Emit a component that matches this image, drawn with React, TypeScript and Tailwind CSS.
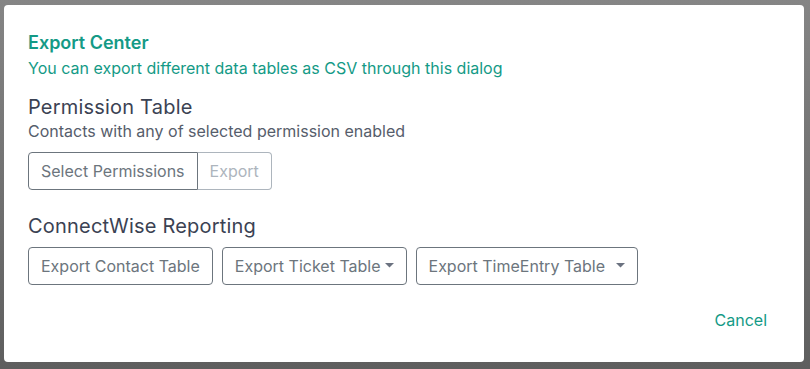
import { ReactNode } from 'react';

function Caret() {
    return (
        <svg width="9" height="5" viewBox="0 0 9 5" className="ml-[4px] mt-[-2px]">
            <path d="M0 0 L9 0 L4.5 4.5 Z" fill="#6b7280" />
        </svg>
    );
}

function OutlineButton({ children, className = '' }: { children: ReactNode, className?: string }) {
    return (
        <button className={`h-[38px] flex items-center border border-[#6c757d] rounded-[4px] px-[12px] text-[16px] text-[#6c757d] bg-white ${className}`}>
            {children}
        </button>
    );
}

export default function App() {
    return (
        <div className="w-full h-[369px] bg-gradient-to-b from-[#858585] to-[#5e5e5e] pt-[5px] pl-[4px] pr-[6px] pb-[7px] font-['Inter',sans-serif]">
            <div className="h-full bg-white rounded-[4px] pl-[24px] pr-[37px] pt-[27px] flex flex-col">
                {/* Header */}
                <h1 className="text-[18px] leading-[22px] font-semibold text-[#149a86]">Export Center</h1>
                <p className="text-[16px] leading-[24px] mt-[2px] text-[#149a86]">You can export different data tables as CSV through this dialog</p>

                {/* Permission Table */}
                <h2 className="text-[20px] leading-[24px] mt-[15px] tracking-[0.2px] text-[#3b4253]">Permission Table</h2>
                <p className="text-[16px] leading-[24px] text-[#565d6b]">Contacts with any of selected permission enabled</p>
                <div className="flex mt-[9px]">
                    <button className="h-[38px] border border-[#6c757d] rounded-l-[4px] px-[12px] text-[16px] text-[#6c757d] bg-white">Select Permissions</button>
                    <button className="h-[38px] border border-l-0 border-[#adb5bd] rounded-r-[4px] px-[12px] text-[16px] text-[#adb5bd] bg-white">Export</button>
                </div>

                {/* ConnectWise */}
                <h2 className="text-[20px] leading-[24px] mt-[24px] tracking-[0.2px] text-[#3b4253]">ConnectWise Reporting</h2>
                <div className="flex gap-[9px] mt-[9px]">
                    <OutlineButton>Export Contact Table</OutlineButton>
                    <OutlineButton>Export Ticket Table<Caret /></OutlineButton>
                    <OutlineButton>Export TimeEntry Table<span className="ml-[7px]" /><Caret /></OutlineButton>
                </div>

                {/* Footer */}
                <div className="flex justify-end mt-[23px]">
                    <button className="text-[16px] leading-[24px] text-[#149a86]">Cancel</button>
                </div>
            </div>
        </div>
    );
}
